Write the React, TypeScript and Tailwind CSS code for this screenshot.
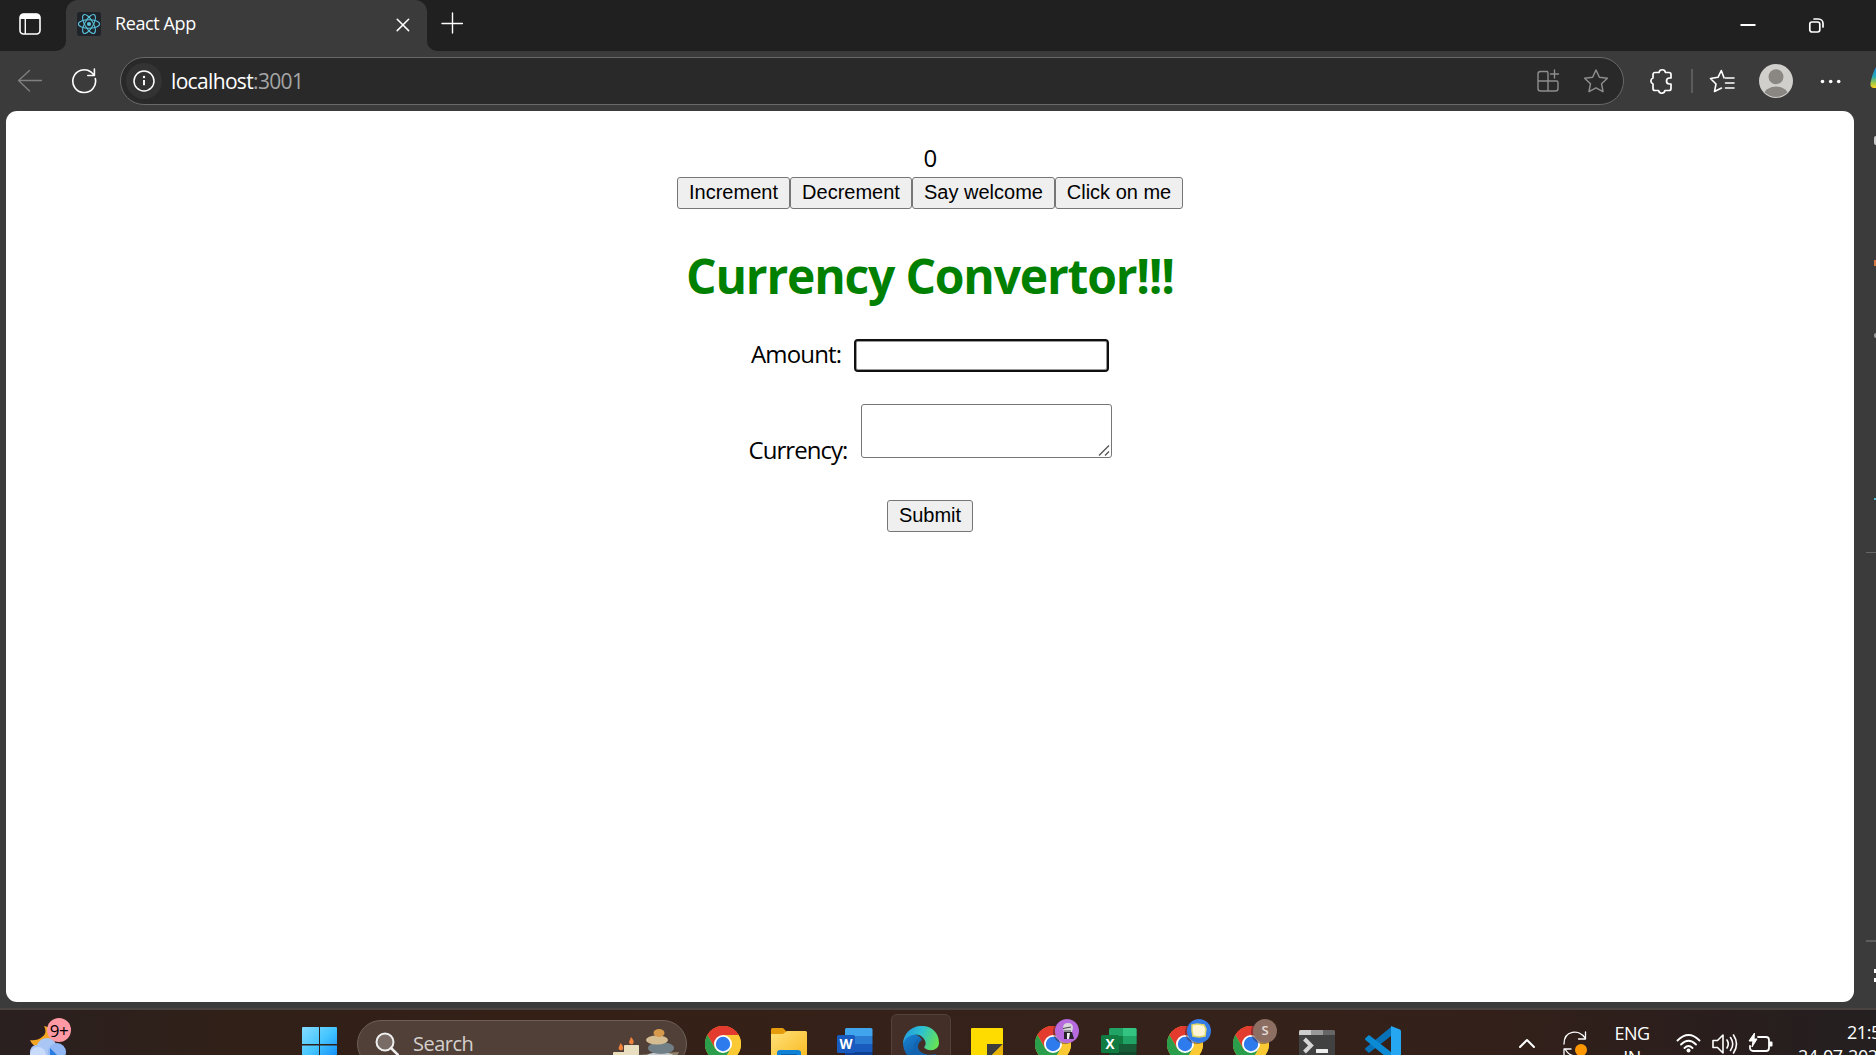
import React from "react";

const stroke = { fill: "none", stroke: "currentColor", strokeLinecap: "round" as const, strokeLinejoin: "round" as const };

function TabStrip() {
  return (
    <div className="flex h-[51px] shrink-0 bg-[#202020] text-white">
      <div className="flex w-[56px] shrink-0 items-start pl-[19px] pt-[13px]">
        <svg width="23" height="23" viewBox="0 0 23 23">
          <rect x="1" y="1" width="20" height="20" rx="3.5" fill="none" stroke="#fff" strokeWidth="1.6" />
          <path d="M1 6V4.5A4 4 0 0 1 5 .8h12a4 4 0 0 1 4 3.7V6z" fill="#fff" />
          <path d="M6.3 6v15" stroke="#fff" strokeWidth="1.4" />
        </svg>
      </div>
      <svg width="10" height="51" className="shrink-0" viewBox="0 0 10 51"><path d="M0 51A10 10 0 0 0 10 41V51z" fill="#3b3b3b" /></svg>
      <div className="flex h-[51px] w-[361px] shrink-0 rounded-t-[12px] bg-[#3b3b3b] pl-[11px]">
        <svg width="24" height="24" viewBox="0 0 24 24" className="mt-[12px] shrink-0">
          <rect width="24" height="24" rx="2.5" fill="#20232a" />
          <g fill="none" stroke="#58c4dc" strokeWidth="1.05">
            <ellipse cx="12" cy="12" rx="10.6" ry="4.2" />
            <ellipse cx="12" cy="12" rx="10.6" ry="4.2" transform="rotate(60 12 12)" />
            <ellipse cx="12" cy="12" rx="10.6" ry="4.2" transform="rotate(120 12 12)" />
          </g>
          <circle cx="12" cy="12" r="2.1" fill="#58c4dc" />
        </svg>
        <span className="ml-[14px] mt-[10px] w-[280px] whitespace-nowrap text-[18px] leading-[26px] tracking-[-0.4px]">React App</span>
        <svg width="14" height="14" viewBox="0 0 14 14" className="ml-auto mr-[17px] mt-[18px] shrink-0"><path d="M1.2 1.2l11.4 11.4M12.6 1.2L1.2 12.6" {...stroke} strokeWidth="1.5" /></svg>
      </div>
      <svg width="10" height="51" className="shrink-0" viewBox="0 0 10 51"><path d="M10 51A10 10 0 0 1 0 41V51z" fill="#3b3b3b" /></svg>
      <svg width="22" height="22" viewBox="0 0 22 22" className="ml-[4px] mt-[12px] shrink-0"><path d="M11.500 1v20M1 11.500h20.500" {...stroke} strokeWidth="1.4" /></svg>
      <svg width="16" height="4" viewBox="0 0 16 4" className="ml-auto mt-[23px] shrink-0"><path d="M.5 2h15" stroke="#fff" strokeWidth="2" /></svg>
      <svg width="17" height="17" viewBox="0 0 17 17" className="ml-[52px] mr-[51px] mt-[17px] shrink-0">
        <rect x="1.800" y="5" width="10" height="10" rx="2.200" {...stroke} strokeWidth="1.7" />
        <path d="M6 2h4.500a4.500 4.500 0 0 1 4.500 4.500V10" {...stroke} strokeWidth="1.7" />
      </svg>
    </div>
  );
}

function Toolbar() {
  return (
    <div className="flex h-[60px] shrink-0 items-center bg-[#3b3b3b] text-white">
      <svg width="26" height="24" viewBox="0 0 26 24" className="ml-[17px] shrink-0 text-[#808080]"><path d="M12.500 1.500L1.500 11.500l11 10.500M1.500 11.500h23" {...stroke} strokeWidth="1.3" /></svg>
      <svg width="26" height="26" viewBox="0 0 26 26" className="ml-[28px] shrink-0">
        <path d="M24.300 10.500A11.400 11.400 0 1 1 20 4l3.200 3M23.400 1v6.500h-6.600" {...stroke} strokeWidth="1.6" />
      </svg>
      <div className="ml-[23px] flex h-[48px] w-[1504px] shrink-0 items-center rounded-full border border-[#686868] bg-[#292929] pl-[5px]">
        <div className="flex size-[36px] shrink-0 items-center justify-center rounded-full bg-[#333]">
          <svg width="22" height="22" viewBox="0 0 22 22"><circle cx="11" cy="11" r="10" {...stroke} strokeWidth="1.5" /><path d="M11 10v5.200" stroke="#fff" strokeWidth="1.900" /><circle cx="11" cy="7" r="1.200" fill="#fff" /></svg>
        </div>
        <span className="ml-[9px] whitespace-nowrap text-[21px] leading-[30px] tracking-[-0.66px]">localhost<span className="text-[#a5a5a5]">:3001</span></span>
        <svg width="24" height="24" viewBox="0 0 24 24" className="ml-auto shrink-0 text-[#8d8d8d]">
          <path d="M11.500 2.500h-7A2.500 2.500 0 0 0 2 5v14.500A2.500 2.500 0 0 0 4.500 22h15a2.500 2.500 0 0 0 2.500-2.500v-6a1.500 1.500 0 0 0-1.500-1.500H2M12 22V4a1.500 1.500 0 0 0-1.500-1.500M18.500 1v8M14.500 5h8" {...stroke} strokeWidth="1.400" />
        </svg>
        <svg width="26" height="26" viewBox="0 0 26 26" className="ml-[23px] mr-[14px] shrink-0 text-[#8d8d8d]"><path d="M13 2l3.400 7.300 8 1-5.900 5.400 1.500 8L13 19.800l-7 3.900 1.500-8-5.900-5.400 8-1z" {...stroke} strokeWidth="1.500" /></svg>
      </div>
      <svg width="25" height="26" viewBox="0 0 25 26" className="ml-[25px] shrink-0">
        <path d="M6 4.500h4a3.300 3.300 0 0 1 6.500 0H20a2 2 0 0 1 2 2V10h-1.500a3 3 0 0 0 0 6H22v4.500a2 2 0 0 1-2 2h-4a3.300 3.300 0 0 1-6.500 0H6a2 2 0 0 1-2-2V16a3.200 3.200 0 0 1 0-6V6.500a2 2 0 0 1 2-2z" {...stroke} strokeWidth="1.700" />
      </svg>
      <div className="ml-[17px] h-[24px] w-[2px] shrink-0 bg-[#5c5c5c]" />
      <svg width="26" height="26" viewBox="0 0 26 26" className="ml-[16px] shrink-0">
        <path d="M15 9.800L12.300 2.500 9 9.300l-7.500 1.200L7 16l-1.500 7.500L12.500 20M16.500 10H25M16.500 15H25M16.500 20H25" {...stroke} strokeWidth="1.600" />
      </svg>
      <svg width="34" height="34" viewBox="0 0 34 34" className="ml-[24px] shrink-0">
        <clipPath id="face"><circle cx="17" cy="17" r="16" /></clipPath>
        <circle cx="17" cy="17" r="17" fill="#d1cfcc" />
        <g clipPath="url(#face)" fill="#8a8681"><circle cx="17" cy="12.700" r="7.500" /><ellipse cx="17" cy="32" rx="12.500" ry="9.500" /></g>
      </svg>
      <svg width="22" height="6" viewBox="0 0 22 6" className="ml-[27px] shrink-0" fill="#fff"><circle cx="2.500" cy="3.500" r="1.800" /><circle cx="10.700" cy="3.500" r="1.800" /><circle cx="18.700" cy="3.500" r="1.800" /></svg>
      <svg width="6" height="24" viewBox="0 0 6 24" className="ml-auto mb-[8px] shrink-0">
        <defs><linearGradient id="cop" x1="0" y1="0" x2="0" y2="1"><stop offset="0" stopColor="#168de2" /><stop offset=".45" stopColor="#28a7b8" /><stop offset=".75" stopColor="#99c84b" /><stop offset="1" stopColor="#ffd21d" /></linearGradient></defs>
        <path d="M6 2Q2.500 8 .5 18Q0 22.500 3.500 23H6z" fill="url(#cop)" />
      </svg>
    </div>
  );
}

const PageButton = ({ label, className }: { label: string; className: string }) => (
  <button className={`${className} h-[32px] shrink-0 whitespace-nowrap rounded-[3px] border border-[#767676] bg-[#efefef] pb-[2px] text-center font-['Liberation_Sans',sans-serif] text-[20px] leading-[28px] text-black`}>{label}</button>
);

function ConverterPage() {
  return (
    <main className="flex h-[891px] w-[1848px] shrink-0 flex-col items-center rounded-[11px] bg-white text-[24px] leading-[32px] text-black">
      <div className="mt-[31px] h-[32px] tracking-[-0.5px]">0</div>
      <div className="mt-[3px] flex">
        <PageButton label="Increment" className="w-[113px]" />
        <PageButton label="Decrement" className="w-[122px]" />
        <PageButton label="Say welcome" className="w-[143px]" />
        <PageButton label="Click on me" className="w-[128px]" />
      </div>
      <h1 className="mt-[35px] h-[64px] whitespace-nowrap text-[48px] font-bold leading-[64px] tracking-[-1.2px] text-[#008000]">Currency Convertor!!!</h1>
      <div className="mt-[31px] flex w-[360px] items-start">
        <label className="-mt-px w-[104px] whitespace-nowrap pl-px tracking-[-0.85px]">Amount:</label>
        <input aria-label="Amount" className="h-[33px] w-[255px] shrink-0 rounded-[4px] border-2 border-[#101010] bg-white shadow-[inset_0_0_0_1px_#9a9a9a] outline-none" />
      </div>
      <div className="mt-[32px] flex w-[363px] items-end">
        <label className="mb-[-8px] w-[113px] whitespace-nowrap tracking-[-0.95px]">Currency:</label>
        <div className="flex h-[54px] w-[251px] shrink-0 items-end justify-end rounded-[3px] border border-[#767676]">
          <svg width="13" height="13" viewBox="0 0 13 13"><path d="M1 11.500L11 1.500M7 11.500l4-4" stroke="#555" strokeWidth="1.300" /></svg>
        </div>
      </div>
      <div className="mt-[42px] h-[32px] leading-none"><PageButton label="Submit" className="block w-[86px]" /></div>
    </main>
  );
}

function EdgeSidebar() {
  return (
    <aside className="flex w-[22px] shrink-0 flex-col items-end">
      <div className="mt-[25px] h-[9px] w-[2px] rounded-l-full bg-[#c8c8c8]" />
      <div className="mt-[115px] h-[6px] w-[2px] bg-[#d7793e]" />
      <div className="mt-[67px] h-[5px] w-[2px] rounded-l-full bg-[#999]" />
      <div className="mt-[160px] h-[2px] w-[2px] bg-[#4bb9d0]" />
      <div className="mt-[52px] h-[1px] w-[10px] bg-[#666]" />
      <div className="mt-[387px] h-[2px] w-[10px] bg-[#5d5d5d]" />
      <div className="mt-[27px] h-[4px] w-[2px] bg-white" />
      <div className="mt-[5px] h-[4px] w-[2px] bg-white" />
    </aside>
  );
}

function Chrome({ badge }: { badge?: React.ReactNode }) {
  return (
    <div className="relative size-[36px]">
      <svg width="36" height="36" viewBox="0 0 36 36">
        <circle cx="18" cy="18" r="18" fill="#fbc934" />
        <path d="M18 18L2.400 9A18 18 0 0 1 33.600 9z" fill="#e33b2e" />
        <path d="M18 9h15.600A18 18 0 0 0 2.400 9l7.800 13.500z" fill="#e33b2e" />
        <path d="M2.400 9A18 18 0 0 0 18 36l7.800-13.500L18 26l-7.800-3.500z" fill="#2b9e4b" />
        <path d="M33.600 9H18l7.800 13.500L18 36A18 18 0 0 0 33.600 9z" fill="#fbc934" />
        <circle cx="18" cy="18" r="9" fill="#fff" /><circle cx="18" cy="18" r="7.200" fill="#2e7bee" />
      </svg>
      {badge && <div className="absolute left-[20px] top-[-7px] size-[24px] overflow-hidden rounded-full shadow-[-2px_1px_0_rgba(60,40,60,0.5)]">{badge}</div>}
    </div>
  );
}

function Office({ letter, colors, box }: { letter: string; colors: string[]; box: string }) {
  const excel = letter === "X";
  return (
    <svg width="36" height="36" viewBox="0 0 36 36">
      <clipPath id={`office${letter}`}><rect x="8" y="2" width="27.500" height="32" rx="1.500" /></clipPath>
      <g clipPath={`url(#office${letter})`}>
        {colors.map((c, i) => <rect key={c} x="8" y={2 + i * 8} width="28" height="8" fill={c} />)}
        {excel && <><rect x="22" y="2" width="14" height="8" fill="#33c481" /><rect x="22" y="10" width="14" height="8" fill="#21a366" /></>}
      </g>
      <rect y="9" width="18" height="18" rx="1.500" fill={box} />
      <text x="9" y="22.500" textAnchor="middle" fontFamily="Open Sans" fontWeight="700" fontSize="13.500" fill="#fff">{letter}</text>
    </svg>
  );
}

const Folder = () => (
  <svg width="36" height="36" viewBox="0 0 36 36">
    <defs><linearGradient id="fold" x1="0" y1="0" x2="1" y2="1"><stop stopColor="#ffe17a" /><stop offset="1" stopColor="#f9b91f" /></linearGradient></defs>
    <path d="M0 3.500Q0 2 1.500 2H12l4 4v8H0z" fill="#e59c0c" /><path d="M0 8h12l4-3h18.500Q36 5 36 6.500V34H0z" fill="url(#fold)" />
    <path d="M6 36V27q0-3 3-3h18q3 0 3 3v9z" fill="#0f82d5" /><path d="M10 28h16v2H10z" fill="#0b5ea8" />
  </svg>
);

const Edge = () => (
  <svg width="36" height="36" viewBox="0 0 36 36">
    <defs>
      <linearGradient id="edgeTop" x1="0" y1=".3" x2="1" y2=".6"><stop stopColor="#239bdd" /><stop offset=".45" stopColor="#2dc1d1" /><stop offset="1" stopColor="#66e352" /></linearGradient>
      <linearGradient id="edgeBody" x1="0" y1="0" x2=".8" y2="1"><stop stopColor="#1784d7" /><stop offset="1" stopColor="#114a8b" /></linearGradient>
    </defs>
    <path d="M0 18a18 18 0 0 0 31 12c-10 3-17-3-16-10 .3-3 2-5 4-6C14 4 0 8 0 18z" fill="url(#edgeBody)" />
    <path d="M0 18C1-6 36-6 36 17c0 6-7 9-13 6-2-1-2-2-1-3 1-2 1-4-1-7C16 5 3 8 0 18z" fill="url(#edgeTop)" />
    <path d="M10 24c0-7 4-11 9-11-4 1-5 5-4 9 2 6 10 8 18 6-3 5-9 8-14 8-6-1-9-6-9-12z" fill="#1263b0" />
  </svg>
);

const Sticky = () => (
  <svg width="36" height="36" viewBox="0 0 36 36"><path d="M2 3q0-1 1-1h30q1 0 1 1v31H2z" fill="#fedc00" /><path d="M18 34V18h16z" fill="#3d3d3d" /><path d="M18 34L34 18v16z" fill="#eab308" /></svg>
);

const Terminal = () => (
  <svg width="36" height="36" viewBox="0 0 36 36"><rect y="4" width="36" height="32" rx="1.500" fill="#414141" /><path d="M0 5.500Q0 4 1.500 4H12v5H0z" fill="#ccc" /><path d="M12 4h12v5H12z" fill="#999" /><path d="M24 4h10.500Q36 4 36 5.500V9H24z" fill="#666" /><path d="M5.500 13l6.500 6.500-6.500 6.500" fill="none" stroke="#d5d5d5" strokeWidth="4" /><rect x="17" y="23" width="12" height="4" rx=".5" fill="#eee" /></svg>
);

const VSCode = () => (
  <svg width="36" height="36" viewBox="0 0 36 36">
    <path d="M26 1v9L4 27l-3.500-3q-1-1 0-2z" fill="#0872b9" />
    <path d="M.5 12L4 9l22 17v9L.5 14q-1-1 0-2z" fill="#0c8bd5" />
    <path d="M26 0l9 3.500q1 .5 1 2v25q0 1.500-1 2L26 36z" fill="#25a7f2" />
  </svg>
);

const tile = "flex h-[60px] w-[60px] mx-[3px] shrink-0 items-center justify-center rounded-[6px]";

function Taskbar() {
  const portrait = <svg width="24" height="24" viewBox="0 0 24 24"><rect width="24" height="24" fill="#b66ade" /><path d="M8 9q0-5 5-5 5 0 5 5l-1 4H9z" fill="#d8d3dc" /><path d="M9 13h8l2 7H9z" fill="#28222b" /><path d="M12 14h3l-1 6h-2z" fill="#eee" /><path d="M8 9.500l8-1.500M9 12h7" stroke="#444" /></svg>;
  const art = <svg width="24" height="24" viewBox="0 0 24 24"><rect width="24" height="24" fill="#347be8" /><path d="M5 6l5-1 7 1 2 4-1 7-6 1-6-1-1-5z" fill="#fff5d6" stroke="#ddd765" strokeWidth="1.500" /></svg>;
  return (
    <footer className="flex h-[72px] shrink-0 items-center border-t-2 border-[#4b433f] bg-[linear-gradient(90deg,#2a2020_0%,#302018_12%,#352017_30%,#35221a_62%,#33201a_80%,#291e1d_92%,#241f20_100%)] pb-[2px] text-white">
      <div className="relative ml-[29px] h-[44px] w-[44px] shrink-0">
        <svg width="44" height="44" viewBox="0 0 44 44">
          <path d="M15 4q4 7-2 11-5 4-12 3 3 8 12 7 12-2 10-14-2-6-8-7z" fill="#f5a623" />
          <path d="M1 31q0-8 7-8 3-7 10-7 7 0 9 6 9 0 9 9v10H1z" fill="#a9c6f5" />
          <circle cx="9" cy="33" r="8" fill="#c8dcfa" /><circle cx="28" cy="30" r="9" fill="#91b7f4" /><path d="M21 26l8 8-8 8z" fill="#297de2" />
        </svg>
        <div className="absolute left-[18px] top-[-4px] flex size-[24px] items-center justify-center rounded-full bg-[#ff99a4] text-[17px] leading-none tracking-[-0.5px] text-black">9+</div>
      </div>
      <svg width="36" height="36" viewBox="0 0 36 36" className="ml-[229px] shrink-0">
        <defs><linearGradient id="win" x1="0" y1="0" x2="1" y2="1"><stop stopColor="#85dcff" /><stop offset=".5" stopColor="#43c4ff" /><stop offset="1" stopColor="#0a84f5" /></linearGradient></defs>
        <path d="M1 1h16v17H0V2q0-1 1-1zM18 1h16q1 0 1 1v16H18zM0 19.500h17V36H0zM18 19.500h17V36H18z" fill="url(#win)" />
      </svg>
      <div className="ml-[19px] flex h-[48px] w-[330px] shrink-0 items-center overflow-hidden rounded-full border border-[#6d5f57] bg-[#514038] pl-[17px]">
        <svg width="24" height="24" viewBox="0 0 24 24" className="shrink-0 text-[#eee]"><circle cx="10" cy="10" r="8.500" fill="#796c66" stroke="currentColor" strokeWidth="2" /><path d="M16 16l7 7" {...stroke} strokeWidth="2.500" /></svg>
        <span className="ml-[14px] w-[180px] text-[20px] leading-[28px] tracking-[-0.5px] text-[#d5d0cd]">Search</span>
        <svg width="76" height="46" viewBox="0 0 76 46" className="ml-auto mr-[1px] shrink-0">
          <rect x="4" y="31" width="15" height="15" rx="1" fill="#eadfbd" /><rect x="15" y="24" width="15" height="22" rx="1" fill="#e9dec0" />
          <path d="M11.500 22q4 4 2 7-4 1-4-2zM22 16q4 4 2 7-4 1-4-2z" fill="#ef813b" />
          <path d="M28 34l42-3-8 15H28z" fill="#91846c" />
          <ellipse cx="51" cy="37" rx="15" ry="6" fill="#c7ccd1" /><ellipse cx="52" cy="27" rx="13" ry="6" fill="#718087" /><ellipse cx="48" cy="19" rx="11" ry="4.500" fill="#d5bd91" /><ellipse cx="50" cy="12" rx="5.500" ry="4" fill="#d79a4c" />
        </svg>
      </div>
      <nav className="ml-[3px] flex shrink-0">
        <div className={tile}><Chrome /></div>
        <div className={tile}><Folder /></div>
        <div className={tile}><Office letter="W" colors={["#41a5ee", "#2b7cd3", "#185abd", "#103f91"]} box="#185abd" /></div>
        <div className={`${tile} border border-[#53423a] bg-[#432f27]`}><Edge /></div>
        <div className={tile}><Sticky /></div>
        <div className={tile}><Chrome badge={portrait} /></div>
        <div className={tile}><Office letter="X" colors={["#21a366", "#107c41", "#185c37", "#134a2c"]} box="#107c41" /></div>
        <div className={tile}><Chrome badge={art} /></div>
        <div className={tile}><Chrome badge={<div className="flex size-full items-center justify-center bg-[#8d6e63] text-[13px] font-semibold text-[#e4dbd8]">S</div>} /></div>
        <div className={tile}><Terminal /></div>
        <div className={tile}><VSCode /></div>
      </nav>
      <svg width="18" height="12" viewBox="0 0 18 12" className="ml-[102px] shrink-0"><path d="M2 9l7-7 7 7" {...stroke} strokeWidth="2" /></svg>
      <svg width="26" height="28" viewBox="0 0 26 28" className="ml-[26px] shrink-0">
        <path d="M2 14C2 0 17-1 23 8M23.500 2v7h-7M2 25v-6h7M3 19q4 7 11 7" {...stroke} strokeWidth="1.300" /><circle cx="19" cy="20" r="6" fill="#ff9800" />
      </svg>
      <div className="ml-[25px] mt-[2px] flex w-[38px] shrink-0 flex-col items-center text-[18px] leading-[24px] tracking-[-0.5px]"><span>ENG</span><span>IN</span></div>
      <svg width="25" height="22" viewBox="0 0 25 22" className="ml-[25px] shrink-0">
        <path d="M1.500 7.500q11-11 22 0M5 11.500q7.500-7.500 15 0M8.500 15q4-4 8 0" {...stroke} strokeWidth="1.800" /><circle cx="12.500" cy="17.500" r="2" fill="#fff" />
      </svg>
      <svg width="26" height="22" viewBox="0 0 26 22" className="ml-[11px] shrink-0">
        <path d="M1 7.500h4.500L11 2v18l-5.500-5.500H1zM15 7q2.500 4 0 8M18.500 4.500q4.500 6.500 0 13M21.500 2q6 9 0 18" {...stroke} strokeWidth="1.600" />
      </svg>
      <svg width="26" height="22" viewBox="0 0 26 22" className="ml-[10px] shrink-0">
        <path d="M10 4h8a3 3 0 0 1 3 3v8a3 3 0 0 1-3 3H5a3 3 0 0 1-3-3v-2" {...stroke} strokeWidth="1.800" /><path d="M6.500 0L1 8h4l-1 6 5-8H6z" fill="#fff" stroke="#fff" /><rect x="21" y="8.500" width="3.500" height="5" rx="1" fill="#fff" />
      </svg>
      <div className="ml-auto flex w-[78px] shrink-0 flex-col whitespace-nowrap text-[18px] leading-[24px] tracking-[-0.45px]"><span className="pl-[49px]">21:5</span><span>24-07-202</span></div>
    </footer>
  );
}

export default function App() {
  return (
    <div className="flex h-[1055px] w-[1876px] flex-col overflow-hidden bg-[#3b3b3b] font-['Open_Sans','Noto_Sans',sans-serif]">
      <TabStrip />
      <Toolbar />
      <div className="flex h-[897px] shrink-0 pl-[6px]">
        <ConverterPage />
        <EdgeSidebar />
      </div>
      <Taskbar />
    </div>
  );
}
